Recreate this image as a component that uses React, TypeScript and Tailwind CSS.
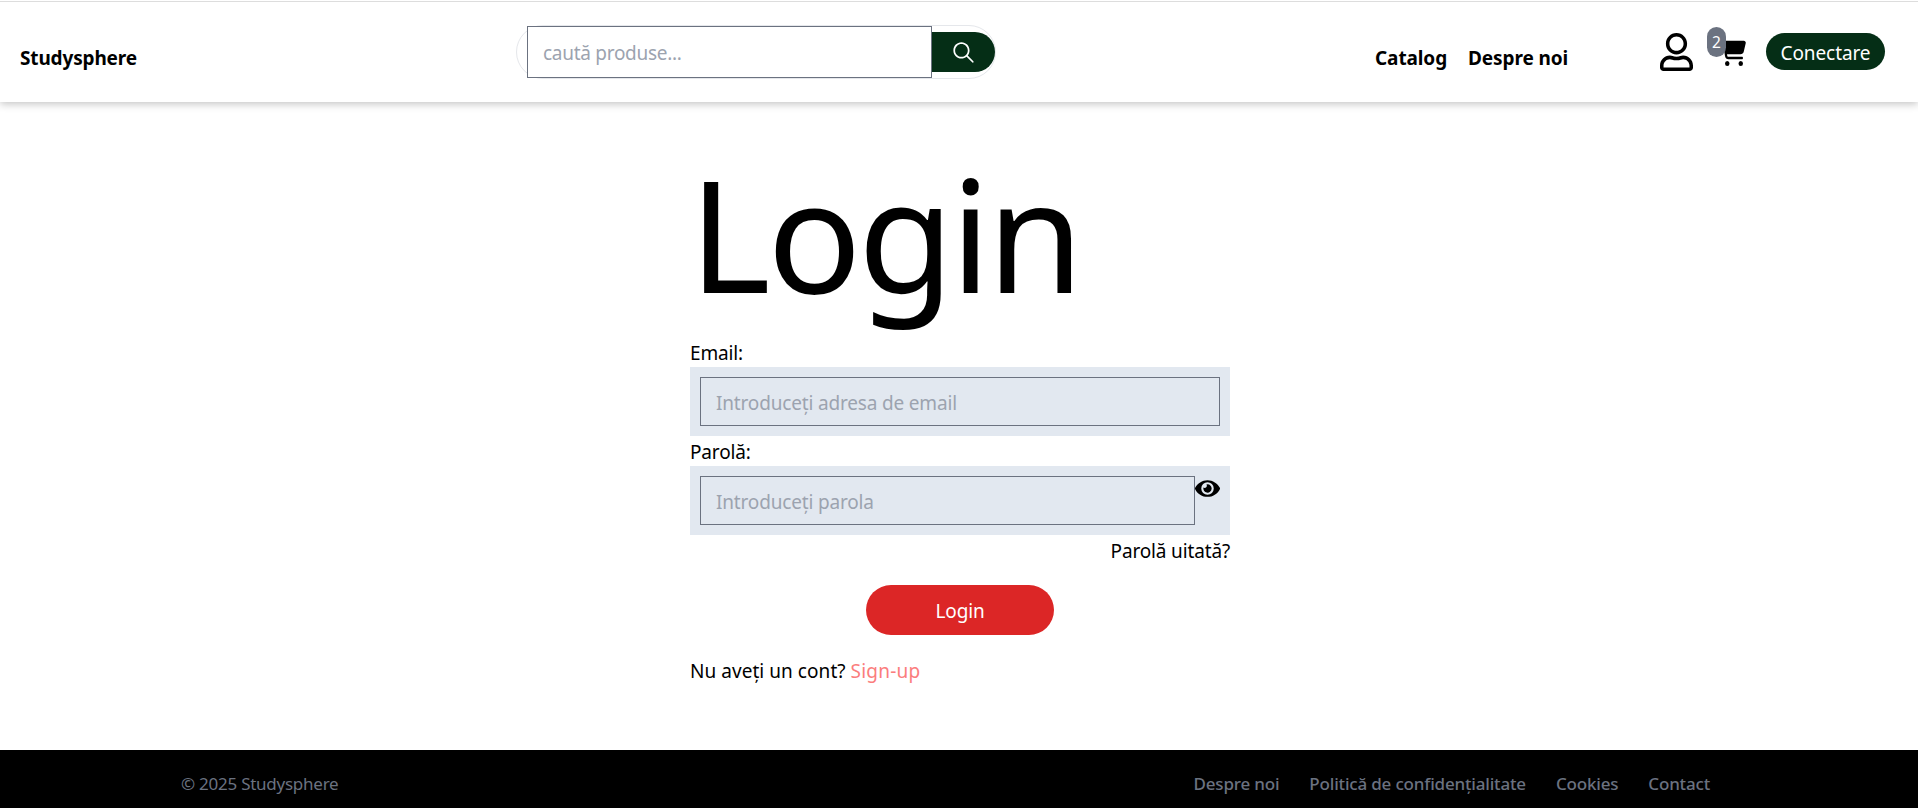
import { FaEye, FaRegUser } from "react-icons/fa";
import { FaCartShopping } from "react-icons/fa6";
import { IoIosSearch } from "react-icons/io";

const footerLinks = ["Despre noi", "Politică de confidențialitate", "Cookies", "Contact"];

function Header() {
  return (
    <header className="h-[101px] flex items-start bg-white shadow-[0_2px_8px_rgba(0,0,0,0.24)]">
      <a href="#" className="ml-5 mt-[42px] w-[496px] text-[19px] leading-[30px] font-bold tracking-[-0.15px]">
        Studysphere
      </a>
      <div className="mt-[24px] h-[54px] w-[480px] flex items-center rounded-full border border-gray-200 pl-[10px]">
        <input
          type="text"
          placeholder="caută produse..."
          className="h-[52px] w-[405px] shrink-0 border border-[#6b7280] bg-white pl-[15px] pt-px text-[19px] tracking-[-0.28px] placeholder:text-[#9ca3af] outline-none"
        />
        <button className="h-10 w-[63px] shrink-0 flex items-center justify-center rounded-r-full bg-[#052e16] text-white">
          <IoIosSearch className="size-[27px]" />
        </button>
      </div>
      <nav className="ml-[379px] mt-[42px] w-[285px] flex gap-[21px] text-[19px] leading-[30px] font-bold tracking-[-0.1px]">
        <a href="#">Catalog</a>
        <a href="#">Despre noi</a>
      </nav>
      <FaRegUser className="mt-[32px] h-[38px] w-[33px]" preserveAspectRatio="none" />
      <div className="relative ml-[26px] mt-[38px] h-[27px] w-[27px]">
        <FaCartShopping className="h-[27px] w-[27px]" preserveAspectRatio="none" />
        <span className="absolute -left-[12px] -top-[12px] flex h-[30px] w-[19px] items-center justify-center rounded-full bg-[#6b7280] pt-px text-[15.5px] text-white">
          2
        </span>
      </div>
      <button className="ml-5 mt-[32px] h-[37px] w-[119px] rounded-full bg-[#052e16] pt-[3px] text-[19px] leading-[34px] tracking-[-0.1px] text-white">
        Conectare
      </button>
    </header>
  );
}

function LoginForm() {
  return (
    <main className="ml-[690px] mt-[78px] h-[570px] w-[540px] text-[19px] leading-[30px] tracking-[-0.15px]">
      <h1 className="-ml-px h-[158px] text-[156px] leading-[105px] tracking-[-3.5px]">Login</h1>
      <form>
        <label className="block h-[29px]">Email:</label>
        <div className="h-[69px] bg-slate-200 p-[10px]">
          <input
            type="email"
            placeholder="Introduceți adresa de email"
            className="block h-[49px] w-full border border-[#6b7280] pl-[15px] pt-[3px] tracking-[-0.17px] placeholder:text-[#9ca3af] outline-none"
          />
        </div>
        <label className="block h-[30px] pt-px">Parolă:</label>
        <div className="flex h-[69px] bg-slate-200 p-[10px]">
          <input
            type="password"
            placeholder="Introduceți parola"
            className="block h-[49px] w-[495px] border border-[#6b7280] pl-[15px] pt-[3px] tracking-[-0.17px] placeholder:text-[#9ca3af] outline-none"
          />
          <FaEye className="h-[25px] w-[25px]" />
        </div>
        <a href="#" className="block pt-px text-right">
          Parolă uitată?
        </a>
        <button className="mx-auto mt-[19px] block h-[50px] w-[188px] rounded-full bg-[#dc2626] pt-px text-white">
          Login
        </button>
      </form>
      <p className="mt-[21px] tracking-[0.05px]">
        Nu aveți un cont?{" "}
        <a href="#" className="text-[#fb7d7d] tracking-[0.2px]">
          Sign-up
        </a>
      </p>
    </main>
  );
}

function Footer() {
  return (
    <footer className="flex h-[58px] items-start justify-between bg-black pl-[181px] pr-[208px] pt-[20px] text-[17px] leading-7 text-[#6b7280]">
      <span className="tracking-[-0.25px]">© 2025 Studysphere</span>
      <ul className="flex gap-[30px] font-medium tracking-[-0.18px]">
        {footerLinks.map((label) => (
          <li key={label}>
            <a href="#">{label}</a>
          </li>
        ))}
      </ul>
    </footer>
  );
}

export default function App() {
  return (
    <div className="h-[808px] overflow-hidden bg-white font-['Noto_Sans','Open_Sans',sans-serif] text-black">
      <div className="relative -mb-px h-[2px] border-b border-[#dddddd] bg-white" />
      <Header />
      <LoginForm />
      <Footer />
    </div>
  );
}
